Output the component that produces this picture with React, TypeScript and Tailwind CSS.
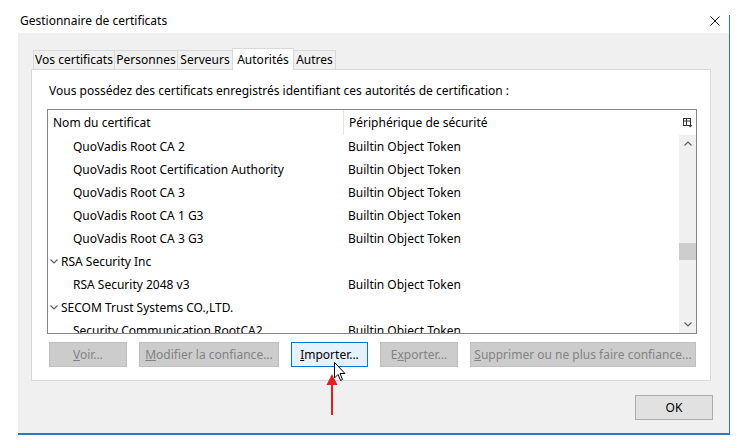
import React from 'react';

const FONT = { fontFamily: '"Noto Sans", "Open Sans", sans-serif' };

interface Row {
  name: string;
  device?: string;
  group?: boolean;
}

const ROWS: Row[] = [
  { name: 'QuoVadis Root CA 2', device: 'Builtin Object Token' },
  { name: 'QuoVadis Root Certification Authority', device: 'Builtin Object Token' },
  { name: 'QuoVadis Root CA 3', device: 'Builtin Object Token' },
  { name: 'QuoVadis Root CA 1 G3', device: 'Builtin Object Token' },
  { name: 'QuoVadis Root CA 3 G3', device: 'Builtin Object Token' },
  { name: 'RSA Security Inc', group: true },
  { name: 'RSA Security 2048 v3', device: 'Builtin Object Token' },
  { name: 'SECOM Trust Systems CO.,LTD.', group: true },
  { name: 'Security Communication RootCA2', device: 'Builtin Object Token' },
];

const TABS = [
  { label: 'Vos certificats', w: 'w-[82px]' },
  { label: 'Personnes', w: 'w-[63px]' },
  { label: 'Serveurs', w: 'w-[55px]' },
  { label: 'Autorités', w: 'w-[62px]', active: true },
  { label: 'Autres', w: 'w-[42px]' },
];

function Chevron({ up }: { up?: boolean }) {
  return (
    <svg width="8" height="5" viewBox="0 0 8 5">
      <polyline
        points={up ? '0.5,4.5 4,1 7.5,4.5' : '0.5,0.5 4,4 7.5,0.5'}
        fill="none"
        stroke="#606060"
        strokeWidth="1.2"
      />
    </svg>
  );
}

export default function App() {
  return (
    <div className="relative w-[744px] h-[441px] bg-white pt-[15px] pl-[18px] overflow-hidden text-[12px] text-black" style={FONT}>
      <div className="w-[712px] border-r border-[#2b7ac0]">
        {/* Title bar */}
        <div className="h-[18px] flex items-start justify-between">
          <span className="pl-[2px] leading-[12px]">Gestionnaire de certificats</span>
          <svg width="10" height="10" viewBox="0 0 10 10" className="mt-[1px] mr-[9px]">
            <path d="M0.5 0.5 L9.5 9.5 M9.5 0.5 L0.5 9.5" stroke="#111" strokeWidth="1" />
          </svg>
        </div>

        {/* Body */}
        <div className="h-[402px] bg-[#f0f0f0] border-b-2 border-[#2b7ac0] pl-[13px] pt-[15px]">
          {/* Tabs */}
          <div className="flex items-end h-[21px] pl-[2px]">
            {TABS.map((t, i) =>
              t.active ? (
                <div
                  key={t.label}
                  className={`${t.w} h-[22px] -mb-px bg-white border border-b-0 border-[#d9d9d9] flex items-start justify-center pt-[2px] relative z-10 -ml-px`}
                >
                  {t.label}
                </div>
              ) : (
                <div
                  key={t.label}
                  className={`${t.w} h-[19px] bg-[#f0f0f0] border-t border-r border-[#d9d9d9] ${i === 0 ? 'border-l' : ''} flex items-center justify-center`}
                >
                  {t.label}
                </div>
              )
            )}
          </div>

          {/* Panel */}
          <div className="w-[680px] h-[312px] bg-white border border-[#d9d9d9] pl-[15px]">
            <div className="ml-[2px] mt-[13px] leading-[16px]">
              Vous possédez des certificats enregistrés identifiant ces autorités de certification :
            </div>

            {/* List */}
            <div className="mt-[10px] w-[650px] h-[225px] border border-[#828790] flex flex-col overflow-hidden">
              <div className="h-[25px] flex items-center shrink-0">
                <div className="w-[296px] pl-[5px] border-r border-[#e5e5e5] h-full flex items-center">Nom du certificat</div>
                <div className="flex-1 pl-[5px]">Périphérique de sécurité</div>
                <div className="w-[17px] flex justify-center">
                  <svg width="10" height="10" viewBox="0 0 10 10">
                    <rect x="0.5" y="0.5" width="7" height="7" fill="none" stroke="#333" />
                    <path d="M0.5 3 H7.5 M3.5 0.5 V7.5" stroke="#333" />
                    <path d="M5 7 L9.5 7 L7.25 9.5 Z" fill="#333" />
                  </svg>
                </div>
              </div>
              <div className="flex flex-1 min-h-0">
                <div className="flex-1 overflow-hidden">
                  {ROWS.map((r) => (
                    <div key={r.name} className="h-[23px] flex items-center shrink-0">
                      {r.group ? (
                        <div className="pl-[2px] flex items-center gap-[3px]">
                          <Chevron />
                          <span>{r.name}</span>
                        </div>
                      ) : (
                        <>
                          <div className="w-[296px] pl-[25px]">{r.name}</div>
                          <div className="pl-[4px]">{r.device}</div>
                        </>
                      )}
                    </div>
                  ))}
                </div>
                {/* Scrollbar */}
                <div className="w-[17px] bg-[#f0f0f0] flex flex-col items-center">
                  <div className="h-[17px] flex items-center justify-center"><Chevron up /></div>
                  <div className="flex-1 w-full pt-[91px]">
                    <div className="h-[17px] w-full bg-[#cdcdcd]" />
                  </div>
                  <div className="h-[17px] flex items-center justify-center"><Chevron /></div>
                </div>
              </div>
            </div>

            {/* Buttons */}
            <div className="mt-[8px] ml-[2px] flex gap-[12px]">
              <button className="w-[78px] h-[25px] bg-[#cccccc] border border-[#bfbfbf] text-[#838383]"><u>V</u>oir...</button>
              <button className="w-[140px] h-[25px] bg-[#cccccc] border border-[#bfbfbf] text-[#838383]"><u>M</u>odifier la confiance...</button>
              <button className="w-[77px] h-[25px] bg-[#e5f1fb] border border-[#0078d7] text-black"><u>I</u>mporter...</button>
              <button className="w-[78px] h-[25px] bg-[#cccccc] border border-[#bfbfbf] text-[#838383]">E<u>x</u>porter...</button>
              <button className="w-[226px] h-[25px] bg-[#cccccc] border border-[#bfbfbf] text-[#838383]"><u>S</u>upprimer ou ne plus faire confiance...</button>
            </div>
          </div>

          {/* OK */}
          <div className="mt-[14px] flex justify-end pr-[16px]">
            <button className="w-[78px] h-[25px] bg-[#e1e1e1] border border-[#adadad]">OK</button>
          </div>
        </div>
      </div>

      {/* Mouse cursor */}
      <svg className="absolute left-[334px] top-[362px]" width="13" height="20" viewBox="0 0 13 20">
        <path d="M0.5 0.5 L0.5 16 L4 12.5 L6.5 18.5 L8.5 17.5 L6 11.5 L11 11.5 Z" fill="#fff" stroke="#000" strokeWidth="1" />
      </svg>

      {/* Red arrow */}
      <svg className="absolute left-[325px] top-[374px]" width="14" height="42" viewBox="0 0 14 42">
        <path d="M7 0 L12.5 11 L1.5 11 Z" fill="#e41e1e" />
        <rect x="6" y="10" width="2" height="31" fill="#e41e1e" />
      </svg>
    </div>
  );
}
